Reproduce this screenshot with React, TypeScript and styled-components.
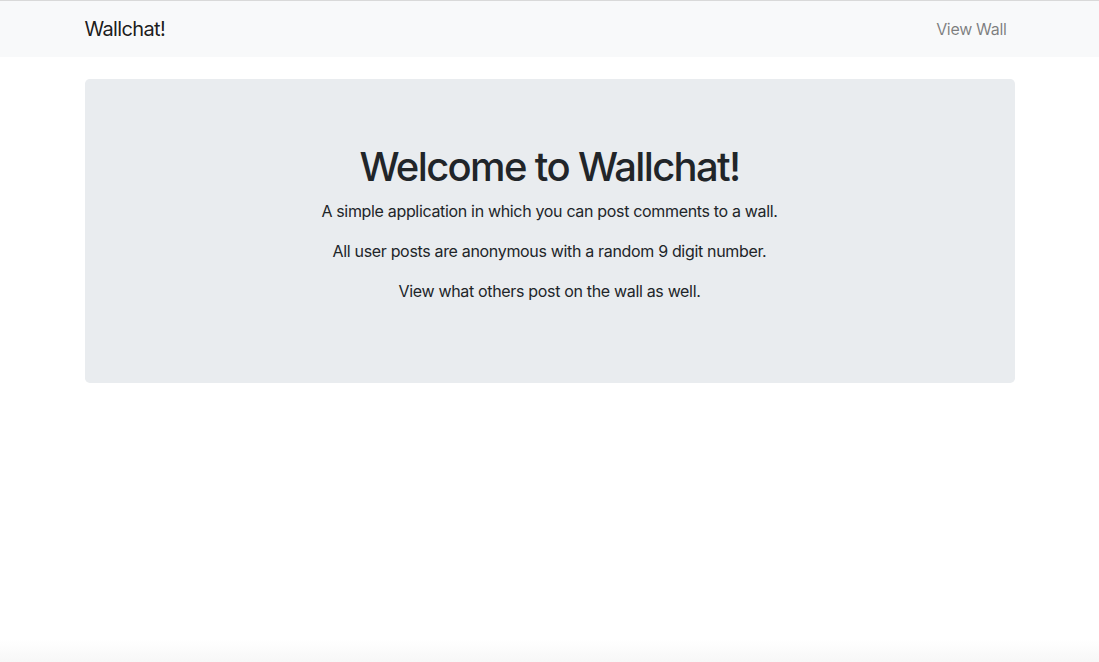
import React from "react";
import styled, { createGlobalStyle } from "styled-components";

const Global = createGlobalStyle`
  html, body { margin: 0; padding: 0; }
  body {
    font-family: Inter, "Helvetica Neue", Arial, sans-serif;
    font-size: 16px;
    line-height: 1.5;
    color: #212529;
    background: #fff;
    min-height: 662px;
  }
  * { box-sizing: border-box; }
`;

const Page = styled.div`
  min-height: 662px;
  border-top: 1px solid #d9d9d9;
  background: linear-gradient(to bottom, #fff 0, #fff 638px, #f7f7f7 662px);
`;

const Navbar = styled.nav`
  background: #f8f9fa;
  padding: 8px 16px;
  height: 56px;
`;

const Container = styled.div`
  width: 960px;
  margin: 0 auto;
  padding: 0 15px;
`;

const NavInner = styled(Container)`
  display: flex;
  align-items: center;
  justify-content: space-between;
  height: 40px;
`;

const Brand = styled.a`
  font-size: 20px;
  line-height: 30px;
  color: rgba(0, 0, 0, 0.9);
  text-decoration: none;
  letter-spacing: -0.65px;
`;

const NavLink = styled.a`
  font-size: 16px;
  line-height: 24px;
  padding: 8px;
  color: rgba(0, 0, 0, 0.5);
  text-decoration: none;
  letter-spacing: -0.32px;
`;

const Main = styled(Container)`
  padding-top: 22px;
`;

const Jumbotron = styled.section`
  background: #e9ecef;
  border-radius: 4.8px;
  padding: 64px 32px;
  text-align: center;
`;

const Title = styled.h1`
  margin: 0 0 8px;
  font-size: 40px;
  line-height: 48px;
  font-weight: 500;
  letter-spacing: -1.65px;
`;

const Text = styled.p`
  margin: 0 0 16px;
  font-size: 16px;
  line-height: 24px;
  letter-spacing: -0.33px;
`;

export default function App() {
  return (
    <>
      <Global />
      <Page>
        <Navbar>
          <NavInner>
            <Brand href="#">Wallchat!</Brand>
            <NavLink href="#">View Wall</NavLink>
          </NavInner>
        </Navbar>
        <Main>
          <Jumbotron>
            <Title>Welcome to Wallchat!</Title>
            <Text>A simple application in which you can post comments to a wall.</Text>
            <Text>All user posts are anonymous with a random 9 digit number.</Text>
            <Text>View what others post on the wall as well.</Text>
          </Jumbotron>
        </Main>
      </Page>
    </>
  );
}
